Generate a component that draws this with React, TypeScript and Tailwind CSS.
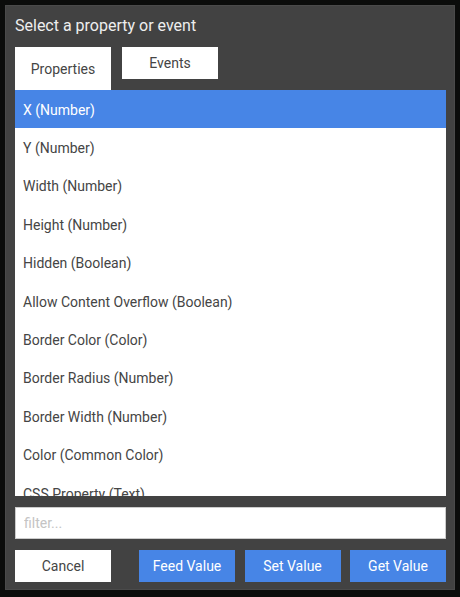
const PROPERTIES = [
  'X (Number)',
  'Y (Number)',
  'Width (Number)',
  'Height (Number)',
  'Hidden (Boolean)',
  'Allow Content Overflow (Boolean)',
  'Border Color (Color)',
  'Border Radius (Number)',
  'Border Width (Number)',
  'Color (Common Color)',
  'CSS Property (Text)',
  'Font Size (Number)',
  'Opacity (Number)',
];

export default function App() {
  const selected = 0;

  return (
    <div className="h-[597px] w-[460px] bg-[#0b0c0b] p-[5px] font-['Roboto',sans-serif]">
      <div className="flex h-[585px] w-[450px] flex-col border border-[#4a4a4a] bg-[#424242] px-[9px] pt-[10px]">
        <h2 className="text-[16px] leading-[20px] text-[#eeeeee]">
          Select a property or event
        </h2>

        {/* Tabs */}
        <div className="mt-[11px] flex items-start gap-[11px]">
          <button className="h-[43px] w-[96px] bg-white pt-[1px] text-[14px] text-[#454545]">
            Properties
          </button>
          <button className="h-[32px] w-[96px] bg-white pt-[1px] text-[14px] text-[#454545]">
            Events
          </button>
        </div>

        {/* List */}
        <div className="h-[406px] w-[431px] overflow-hidden bg-white">
          {PROPERTIES.map((p, i) => (
            <div
              key={p}
              className={
                i === selected
                  ? 'flex h-[38.4px] items-center bg-[#4785e6] px-[8px] pt-[2px] text-[14px] text-white'
                  : 'flex h-[38.4px] items-center px-[8px] pt-[2px] text-[14px] text-[#454545]'
              }
            >
              {p}
            </div>
          ))}
        </div>

        {/* Filter */}
        <input
          placeholder="filter..."
          className="mt-[11px] h-[32px] w-[431px] border border-[#cccccc] bg-white px-[8px] text-[14px] text-[#454545] outline-none placeholder:text-[#c4c4c4]"
        />

        {/* Actions */}
        <div className="mt-[11px] flex w-[431px] items-center">
          <button className="h-[32px] w-[96px] bg-white text-[14px] text-[#454545]">
            Cancel
          </button>
          <div className="ml-auto flex gap-[9.5px]">
            <button className="h-[32px] w-[96px] bg-[#4785e6] text-[14px] text-white">
              Feed Value
            </button>
            <button className="h-[32px] w-[96px] bg-[#4785e6] text-[14px] text-white">
              Set Value
            </button>
            <button className="h-[32px] w-[96px] bg-[#4785e6] text-[14px] text-white">
              Get Value
            </button>
          </div>
        </div>
      </div>
    </div>
  );
}
